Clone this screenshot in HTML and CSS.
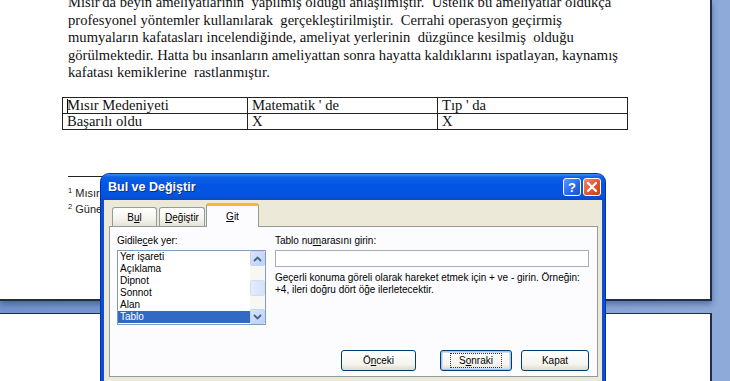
FILE: index.html
```html
<!DOCTYPE html>
<html lang="tr">
<head>
  <meta charset="UTF-8">
  <meta name="viewport" content="width=device-width, initial-scale=1.0">
  <title>Bul ve Değiştir</title>
  <link rel="stylesheet" href="styles.css">
</head>
<body>
  <div class="workspace">
    <div class="page page-top">
      <div class="page-body">
        <p class="para">Mısır'da beyin ameliyatlarının  yapılmış olduğu anlaşılmıştır.  Üstelik bu ameliyatlar oldukça<br>profesyonel yöntemler kullanılarak  gerçekleştirilmiştir.  Cerrahi operasyon geçirmiş<br>mumyaların kafatasları incelendiğinde, ameliyat yerlerinin  düzgünce kesilmiş  olduğu<br>görülmektedir. Hatta bu insanların ameliyattan sonra hayatta kaldıklarını ispatlayan, kaynamış<br>kafatası kemiklerine  rastlanmıştır.</p>

        <table class="grid">
          <tr>
            <td class="col-a"><span class="caret"></span>Mısır Medeniyeti</td>
            <td class="col-b">Matematik ' de</td>
            <td class="col-c">Tıp ' da</td>
          </tr>
          <tr>
            <td>Başarılı oldu</td>
            <td>X</td>
            <td>X</td>
          </tr>
        </table>

        <div class="footnotes">
          <div class="fn-rule"></div>
          <div class="fn"><sup>1</sup> Mısır</div>
          <div class="fn"><sup>2</sup> Güneş</div>
        </div>
      </div>
    </div>
    <div class="page page-next"></div>
  </div>

  <div class="dialog">
    <div class="titlebar">
      <span class="title">Bul ve Değiştir</span>
      <div class="tb-buttons">
        <span class="tb-btn tb-help">?</span>
        <span class="tb-btn tb-close">
          <svg width="12" height="12" viewBox="0 0 12 12"><path d="M2 2 L10 10 M10 2 L2 10" stroke="#fff" stroke-width="2.2" stroke-linecap="round"/></svg>
        </span>
      </div>
    </div>

    <div class="dialog-body">
      <div class="tabs">
        <span class="tab">B<u>u</u>l</span>
        <span class="tab"><u>D</u>eğiştir</span>
        <span class="tab tab-active"><u>G</u>it</span>
      </div>

      <div class="tab-panel">
        <div class="panel-cols">
          <div class="col-left">
            <div class="label">Gidile<u>c</u>ek yer:</div>
            <div class="listbox">
              <ul class="items">
                <li>Yer işareti</li>
                <li>Açıklama</li>
                <li>Dipnot</li>
                <li>Sonnot</li>
                <li>Alan</li>
                <li class="selected">Tablo</li>
              </ul>
              <div class="scrollbar">
                <span class="sb-btn">
                  <svg width="9" height="6" viewBox="0 0 9 6"><path d="M1 5 L4.5 1.5 L8 5" fill="none" stroke="#4d6185" stroke-width="1.8"/></svg>
                </span>
                <span class="sb-track">
                  <span class="sb-thumb"></span>
                </span>
                <span class="sb-btn">
                  <svg width="9" height="6" viewBox="0 0 9 6"><path d="M1 1 L4.5 4.5 L8 1" fill="none" stroke="#4d6185" stroke-width="1.8"/></svg>
                </span>
              </div>
            </div>
          </div>

          <div class="col-right">
            <div class="label">Tablo nu<u>m</u>arasını girin:</div>
            <div class="textbox"></div>
            <p class="help">Geçerli konuma göreli olarak hareket etmek için + ve - girin. Örneğin:<br>+4, ileri doğru dört öğe ilerletecektir.</p>
          </div>
        </div>

        <div class="actions">
          <span class="btn btn-prev">Ö<u>n</u>ceki</span>
          <span class="btn btn-next"><span class="focus">S<u>o</u>nraki</span></span>
          <span class="btn btn-close">Kapat</span>
        </div>
      </div>
    </div>
  </div>
</body>
</html>
```

FILE: styles.css
```css
body {
  margin: 0;
  width: 730px;
  height: 381px;
  overflow: hidden;
  position: relative;
  background: linear-gradient(90deg, #7393cc 0%, #8eaad8 100%);
}
u {
  text-decoration: underline;
  text-underline-offset: 1px;
}
.workspace {
  display: flex;
  flex-direction: column;
  gap: 12px;
}
.page {
  width: 710px;
  background: #ffffff;
  border-right: 2px solid #1f2d4d;
  overflow: hidden;
}
.page-top {
  height: 299px;
  border-bottom: 2px solid #1f2d4d;
  box-shadow: 0 3px 6px rgba(20, 40, 90, 0.45);
}
.page-next {
  height: 80px;
  border-top: 1px solid #1f2d4d;
}
.page-body {
  padding-left: 68px;
}
.para {
  margin: -6px 0 0;
  font-family: "Liberation Serif", "Times New Roman", serif;
  font-size: 14.6px;
  line-height: 17.5px;
  color: #111;
  white-space: pre;
}
.grid {
  margin: 15px 0 0 -6px;
  border-collapse: collapse;
  font-family: "Liberation Serif", "Times New Roman", serif;
  font-size: 14.6px;
  color: #111;
}
.grid td {
  border: 1px solid #222;
  height: 15px;
  line-height: 15px;
  padding: 0 4px;
  white-space: pre;
}
.col-a { width: 176px; }
.col-b { width: 181px; }
.col-c { width: 181px; }
.caret {
  display: inline-block;
  width: 1px;
  height: 14px;
  margin-right: -1px;
  background: #000;
  vertical-align: -3px;
}
.footnotes {
  margin-top: 46px;
  font-family: "Liberation Sans", Arial, sans-serif;
  font-size: 11px;
  line-height: 14px;
  color: #222;
}
.fn-rule {
  width: 160px;
  border-top: 1px solid #222;
  margin-bottom: 7px;
}
.fn sup {
  font-size: 7.5px;
  vertical-align: 4px;
}

/* dialog */
.dialog {
  position: absolute;
  left: 101px;
  top: 174px;
  width: 504px;
  height: 230px;
  background: #0a4fd6;
  border-radius: 8px 8px 0 0;
  display: flex;
  flex-direction: column;
  font-family: "Liberation Sans", Tahoma, sans-serif;
  font-size: 10px;
  color: #000;
  box-shadow: 0 0 0 1px #0831a8;
}
.titlebar {
  height: 26px;
  display: flex;
  align-items: center;
  justify-content: space-between;
  padding: 0 4px 0 7px;
  border-radius: 8px 8px 0 0;
  background: linear-gradient(180deg, #3d8cf6 0%, #0b62e2 12%, #0254e6 45%, #0455e0 80%, #0a48c8 100%);
}
.title {
  font-size: 12.5px;
  font-weight: bold;
  color: #fff;
  text-shadow: 1px 1px 0 #0b2e8a;
}
.tb-buttons {
  display: flex;
  gap: 2px;
}
.tb-btn {
  width: 18px;
  height: 18px;
  box-sizing: border-box;
  border: 1px solid #fff;
  border-radius: 3px;
  display: flex;
  align-items: center;
  justify-content: center;
  color: #fff;
  font-weight: bold;
  font-size: 13px;
}
.tb-help {
  background: linear-gradient(135deg, #5a98fb 0%, #2866e8 60%, #1c52d2 100%);
}
.tb-close {
  background: linear-gradient(135deg, #ef8a6c 0%, #e2542e 55%, #c9401c 100%);
}
.dialog-body {
  flex: 1;
  margin: 0 3px;
  background: #ece9d8;
  padding: 5px 4px 0 5px;
}
.tabs {
  height: 22px;
  display: flex;
  align-items: flex-end;
  padding-left: 3px;
  gap: 2px;
  position: relative;
  z-index: 1;
}
.tab {
  height: 18px;
  width: 43px;
  box-sizing: content-box;
  border: 1px solid #919b9c;
  border-bottom: none;
  border-radius: 3px 3px 0 0;
  background: linear-gradient(180deg, #ffffff 0%, #f4f3ee 60%, #e6e3d6 100%);
  display: flex;
  align-items: center;
  justify-content: center;
  margin-bottom: 1px;
}
.tab:nth-child(2) {
  width: 44px;
}
.tab-active {
  height: 20px;
  width: 51px;
  margin-left: -1px;
  margin-bottom: 0;
  border-top: 3px solid #f7b53a;
  background: #fcfcfe;
  padding-bottom: 1px;
}
.tab-panel {
  height: 137px;
  margin-top: -1px;
  border: 1px solid #919b9c;
  background: #fcfcfe;
  padding: 7px 8px 5px 7px;
  display: flex;
  flex-direction: column;
}
.panel-cols {
  display: flex;
  gap: 9px;
}
.col-left {
  width: 149px;
}
.col-right {
  flex: 1;
}
.label {
  height: 13px;
  line-height: 13px;
  margin-bottom: 3px;
}
.listbox {
  height: 73px;
  border: 1px solid #7f9db9;
  background: #fff;
  display: flex;
}
.items {
  flex: 1;
  margin: 0;
  padding: 0;
  list-style: none;
  line-height: 12px;
}
.items li {
  padding-left: 2px;
  height: 12px;
}
.items .selected {
  background: #316ac5;
  color: #fff;
}
.scrollbar {
  width: 15px;
  display: flex;
  flex-direction: column;
  background: #f7f7f3;
}
.sb-btn {
  height: 15px;
  box-sizing: border-box;
  border: 1px solid #c3d3fd;
  border-radius: 2px;
  background: linear-gradient(135deg, #d8e4fd 0%, #bcd0f9 100%);
  display: flex;
  align-items: center;
  justify-content: center;
}
.sb-track {
  flex: 1;
  display: flex;
  align-items: center;
}
.sb-thumb {
  width: 15px;
  height: 16px;
  box-sizing: border-box;
  border: 1px solid #d2dff9;
  border-radius: 2px;
  background: linear-gradient(90deg, #e4ecfc 0%, #d5e2fb 100%);
}
.textbox {
  height: 15px;
  border: 1px solid #a5acb5;
  background: #fff;
}
.help {
  margin: 5px 0 0;
  line-height: 12px;
}
.actions {
  margin-top: auto;
  display: flex;
  justify-content: flex-end;
  gap: 9px;
}
.btn {
  height: 21px;
  box-sizing: border-box;
  border: 1px solid #003c74;
  border-radius: 3px;
  background: linear-gradient(180deg, #ffffff 0%, #f5f4ee 70%, #dedbcc 100%);
  display: flex;
  align-items: center;
  justify-content: center;
}
.btn-prev { width: 75px; margin-right: 15px; }
.btn-next {
  width: 72px;
  box-shadow: inset 0 0 0 1px #a8c4ef, inset 0 0 0 2px #cedcf4;
}
.btn-close { width: 68px; }
.focus {
  border: 1px dotted #333;
  padding: 1px 8px;
}
```
